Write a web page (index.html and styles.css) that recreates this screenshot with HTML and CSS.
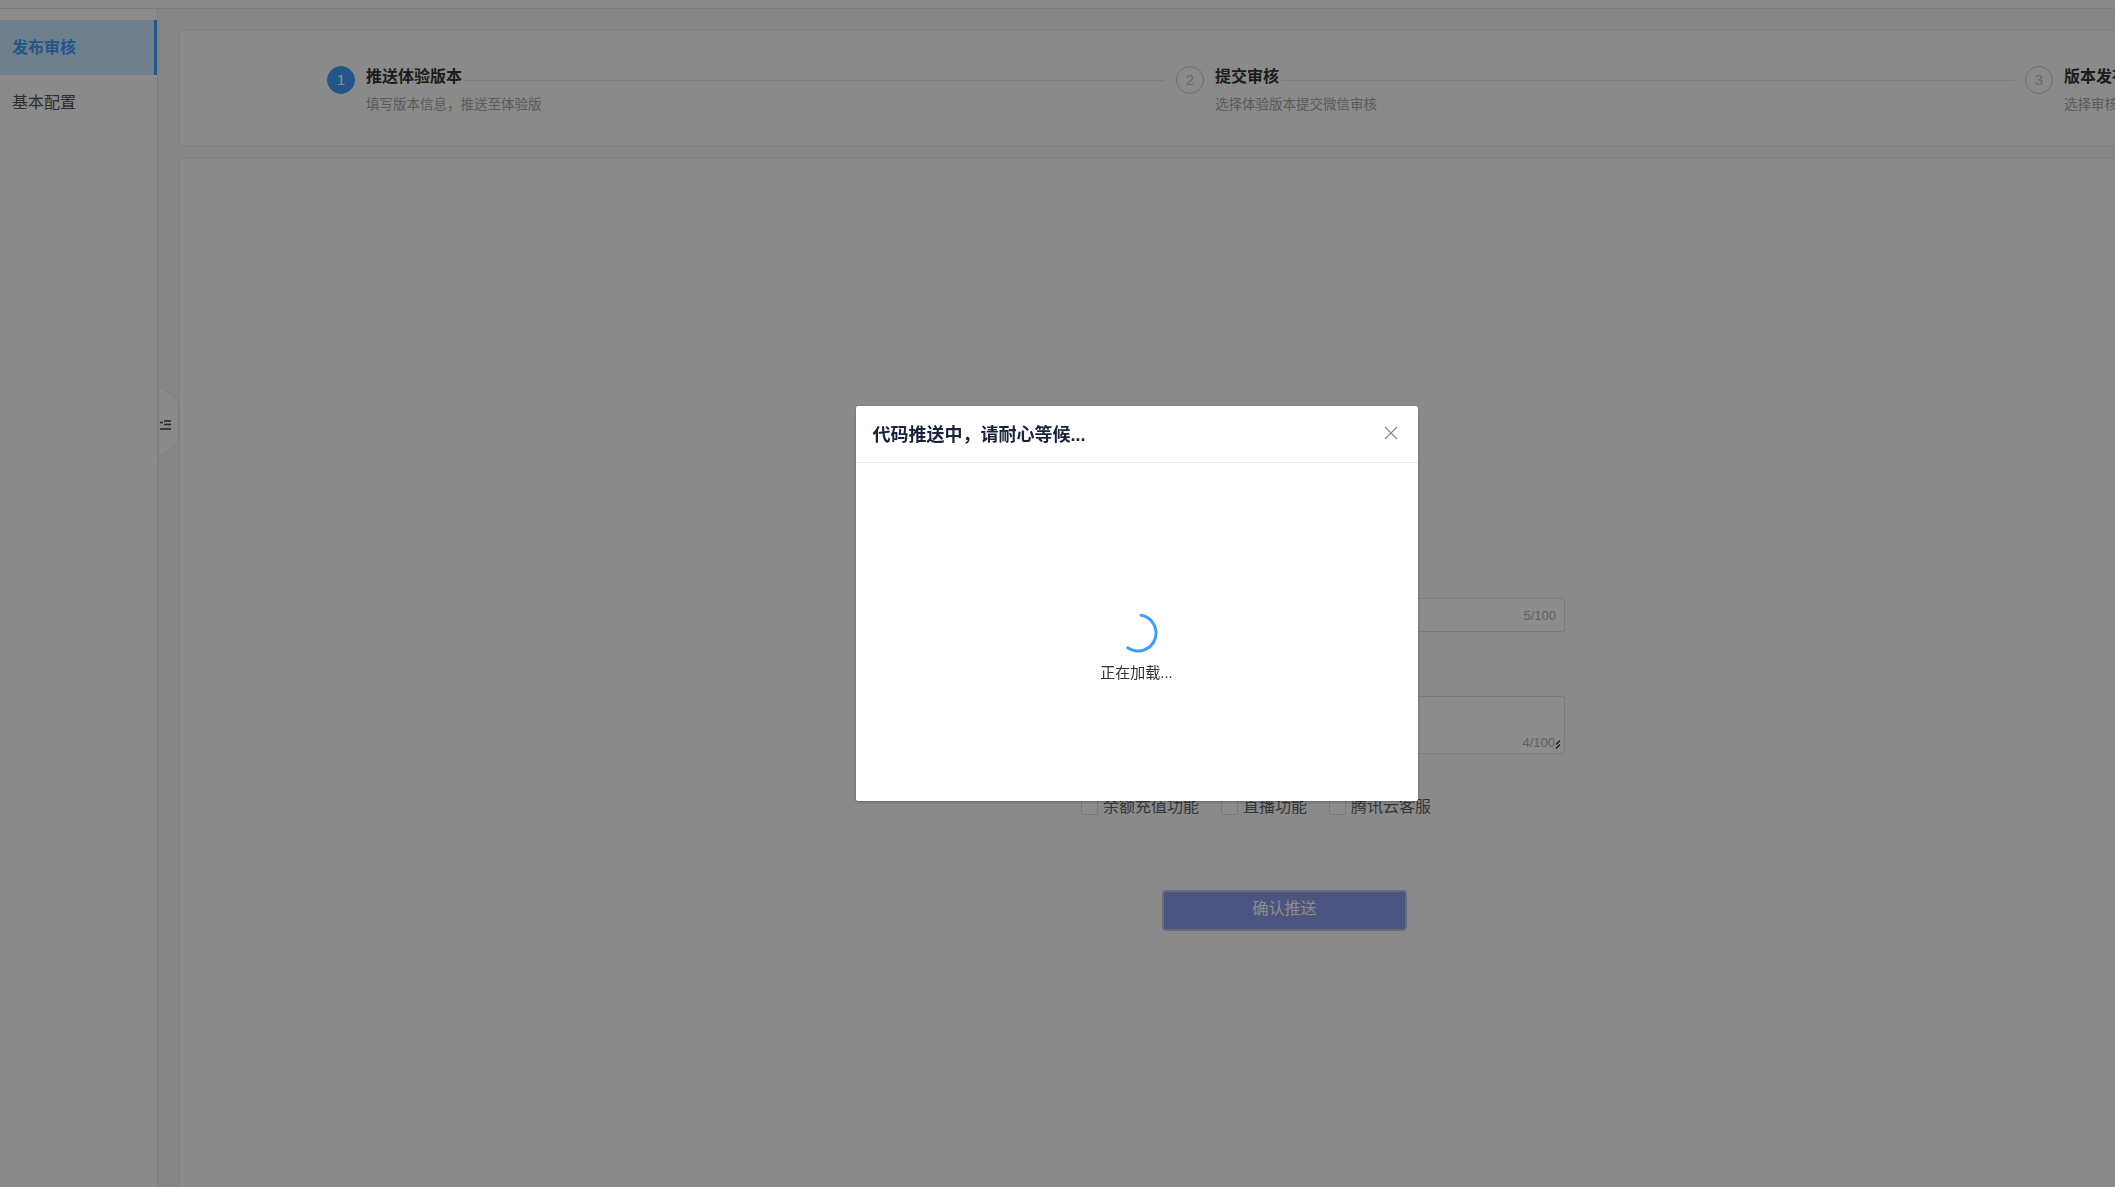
FILE: index.html
```html
<!DOCTYPE html>
<html lang="zh-CN">
<head>
    <meta charset="UTF-8">
    <meta name="viewport" content="width=device-width, initial-scale=1.0">
    <title>发布审核</title>
    <link rel="stylesheet" href="styles.css">
</head>
<body>
    <div class="topbar"></div>

    <div class="layout">
        <aside class="sidebar">
            <div class="menu-item active">发布审核</div>
            <div class="menu-item">基本配置</div>

            <div class="collapse-handle">
                <svg width="22" height="74" viewBox="0 0 22 74">
                    <polygon points="0,0 20,15 20,58 0,73" fill="#fbfbfb" stroke="#e2e2e2" stroke-width="1"/>
                    <g stroke="#4a4a4a" stroke-width="1.6" fill="none">
                        <line x1="6" y1="36" x2="13" y2="36"/>
                        <line x1="2" y1="37.5" x2="5" y2="37.5"/>
                        <line x1="6" y1="39.5" x2="13" y2="39.5"/>
                        <line x1="2" y1="44" x2="13" y2="44"/>
                    </g>
                </svg>
            </div>
        </aside>

        <main class="main">
            <div class="card steps-card">
                <div class="steps">
                    <div class="step">
                        <div class="step-icon active">1</div>
                        <div class="step-main">
                            <div class="step-head">
                                <span class="step-title">推送体验版本</span>
                                <span class="step-line"></span>
                            </div>
                            <div class="step-desc">填写版本信息，推送至体验版</div>
                        </div>
                    </div>
                    <div class="step">
                        <div class="step-icon">2</div>
                        <div class="step-main">
                            <div class="step-head">
                                <span class="step-title">提交审核</span>
                                <span class="step-line"></span>
                            </div>
                            <div class="step-desc">选择体验版本提交微信审核</div>
                        </div>
                    </div>
                    <div class="step">
                        <div class="step-icon">3</div>
                        <div class="step-main">
                            <div class="step-head">
                                <span class="step-title">版本发布</span>
                            </div>
                            <div class="step-desc">选择审核通过的版本发布</div>
                        </div>
                    </div>
                </div>
            </div>

            <div class="card form-card">
                <div class="input-box">
                    <span class="count">5/100</span>
                </div>
                <div class="textarea-box">
                    <span class="count">4/100</span>
                    <svg class="grip" width="6" height="9" viewBox="0 0 6 9">
                        <line x1="5" y1="0.5" x2="1" y2="4.5" stroke="#333" stroke-width="1.2"/>
                        <line x1="5" y1="4.5" x2="1" y2="8.5" stroke="#333" stroke-width="1.2"/>
                    </svg>
                </div>
                <div class="checks">
                    <label class="check"><span class="check-box"></span>余额充值功能</label>
                    <label class="check"><span class="check-box"></span>直播功能</label>
                    <label class="check"><span class="check-box"></span>腾讯云客服</label>
                </div>
                <div class="form-actions">
                    <button class="btn-primary">确认推送</button>
                </div>
            </div>
        </main>
    </div>

    <div class="mask"></div>
    <div class="dialog-wrap">
        <div class="dialog">
            <div class="dialog-header">
                <span class="dialog-title">代码推送中，请耐心等候...</span>
                <svg class="dialog-close" width="14" height="14" viewBox="0 0 14 14">
                    <line x1="1" y1="1" x2="13" y2="13" stroke="#8c8c8c" stroke-width="1.3"/>
                    <line x1="13" y1="1" x2="1" y2="13" stroke="#8c8c8c" stroke-width="1.3"/>
                </svg>
            </div>
            <div class="dialog-body">
                <svg class="spinner" width="42" height="42" viewBox="0 0 42 42">
                    <circle cx="21" cy="21" r="18" fill="none" stroke="#409eff" stroke-width="3"
                            stroke-linecap="round" stroke-dasharray="64 200" transform="rotate(-80 21 21)"/>
                </svg>
                <div class="loading-text">正在加载...</div>
            </div>
        </div>
    </div>
</body>
</html>
```

FILE: styles.css
```css
html, body {
    margin: 0;
    padding: 0;
    height: 100%;
}

body {
    background-color: #f2f2f2;
    font-family: "Liberation Sans", "Noto Sans CJK SC", sans-serif;
    color: #333;
    overflow: hidden;
}

.topbar {
    height: 8px;
    background-color: #fbfbfb;
    border-bottom: 1px solid #e0e0e0;
}

.layout {
    display: flex;
    height: calc(100% - 9px);
}

/* left menu */
.sidebar {
    position: relative;
    flex: none;
    width: 157px;
    padding-top: 11px;
    background-color: #fbfbfb;
    border-right: 1px solid #e6e6e6;
}

.menu-item {
    height: 55px;
    line-height: 55px;
    padding-left: 12px;
    font-size: 16px;
    color: #555;
}

.menu-item.active {
    background-color: #cae7ff;
    color: #409eff;
    font-weight: bold;
    border-right: 3px solid #409eff;
}

.collapse-handle {
    position: absolute;
    left: 158px;
    top: 376px;
    width: 22px;
    height: 74px;
}

.collapse-handle svg {
    display: block;
}

/* main area */
.main {
    flex: none;
    padding: 21px 0 0 21px;
}

.card {
    width: 2100px;
    background-color: #fbfbfb;
    border: 1px solid #ececec;
    border-radius: 2px;
    box-sizing: border-box;
}

.steps-card {
    height: 116px;
    padding: 35px 0 0 147px;
}

.steps {
    display: flex;
}

.step {
    flex: 0 0 849px;
    display: flex;
    align-items: flex-start;
}

.step:last-child {
    flex-basis: auto;
}

.step-icon {
    flex: none;
    width: 26px;
    height: 26px;
    border: 1px solid #c8c8c8;
    border-radius: 50%;
    color: #c0c0c0;
    font-size: 15px;
    line-height: 26px;
    text-align: center;
}

.step-icon.active {
    background-color: #409eff;
    border-color: #409eff;
    color: #fff;
}

.step-main {
    flex: 1;
    margin-left: 11px;
}

.step-head {
    display: flex;
    align-items: flex-start;
    height: 22px;
}

.step-title {
    font-size: 16px;
    line-height: 22px;
    font-weight: bold;
    color: #333;
    white-space: nowrap;
}

.step-line {
    flex: 1;
    height: 1px;
    margin: 14px 11px 0 2px;
    background-color: #e6e6e6;
}

.step-desc {
    margin-top: 7px;
    font-size: 13.5px;
    line-height: 20px;
    color: #a8a8a8;
    white-space: nowrap;
}

/* form */
.form-card {
    height: 1100px;
    margin-top: 12px;
    padding: 439px 0 0 901px;
}

.input-box,
.textarea-box {
    width: 484px;
    box-sizing: border-box;
    background-color: #fff;
    border: 1px solid #e0e0e0;
    border-radius: 3px;
    display: flex;
    justify-content: flex-end;
}

.input-box {
    height: 34px;
    align-items: center;
    padding-right: 8px;
}

.textarea-box {
    height: 58px;
    margin-top: 64px;
    align-items: flex-end;
    padding: 0 3px 3px 0;
}

.count {
    font-size: 13px;
    color: #b0b0b0;
}

.grip {
    margin-bottom: 1px;
}

.checks {
    display: flex;
    gap: 22px;
    margin-top: 44px;
}

.check {
    display: flex;
    align-items: center;
    gap: 5px;
    font-size: 16px;
    line-height: 17px;
    color: #606266;
}

.check-box {
    width: 15px;
    height: 15px;
    border: 1px solid #d8dbe2;
    border-radius: 2px;
    background-color: #fff;
}

.form-actions {
    margin-top: 77px;
    padding-left: 83px;
}

.btn-primary {
    width: 241px;
    height: 37px;
    padding: 0 0 3px;
    border: none;
    border-radius: 2px;
    background-color: #8b9ce8;
    box-shadow: 0 0 0 2px #b8c6e0;
    color: #fff;
    font-family: inherit;
    font-size: 16px;
    line-height: 20px;
}

/* loading dialog */
.mask {
    position: fixed;
    inset: 0;
    background-color: rgba(0, 0, 0, 0.45);
}

.dialog-wrap {
    position: fixed;
    top: 0;
    left: 158px;
    right: 0;
    bottom: 0;
    display: flex;
    justify-content: center;
    align-items: flex-start;
    padding-top: 406px;
}

.dialog {
    width: 562px;
    height: 395px;
    background-color: #fff;
    border-radius: 2px;
    box-shadow: 0 1px 3px rgba(0, 0, 0, 0.3);
}

.dialog-header {
    height: 56px;
    padding: 0 20px 3px 17px;
    box-sizing: border-box;
    height: 57px;
    border-bottom: 1px solid #e8eaec;
    display: flex;
    align-items: center;
    justify-content: space-between;
}

.dialog-title {
    font-size: 18px;
    font-weight: bold;
    color: #17233d;
}

.dialog-body {
    display: flex;
    flex-direction: column;
    align-items: center;
    padding-top: 149px;
}

.spinner {
    display: block;
    margin-left: 3px;
}

.loading-text {
    margin-top: 9px;
    font-size: 15px;
    line-height: 20px;
    color: #333;
}
```
